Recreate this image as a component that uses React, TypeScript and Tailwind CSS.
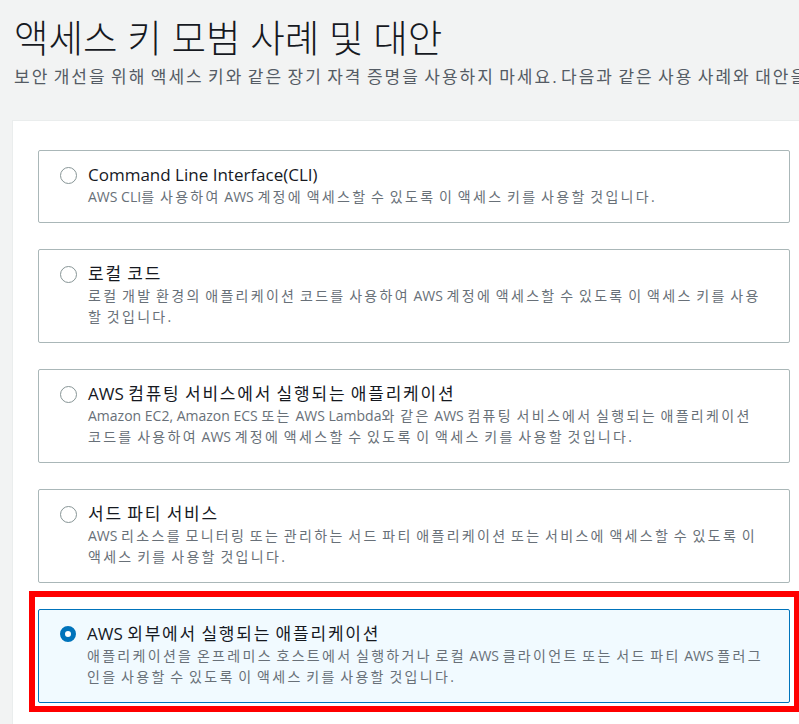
import React from 'react';

// 사용 사례 목록
const options = [
  {
    id: 'cli',
    title: 'Command Line Interface(CLI)',
    desc: 'AWS CLI를 사용하여 AWS 계정에 액세스할 수 있도록 이 액세스 키를 사용할 것입니다.',
  },
  {
    id: 'local',
    title: '로컬 코드',
    desc: '로컬 개발 환경의 애플리케이션 코드를 사용하여 AWS 계정에 액세스할 수 있도록 이 액세스 키를 사용할 것입니다.',
  },
  {
    id: 'compute',
    title: 'AWS 컴퓨팅 서비스에서 실행되는 애플리케이션',
    desc: 'Amazon EC2, Amazon ECS 또는 AWS Lambda와 같은 AWS 컴퓨팅 서비스에서 실행되는 애플리케이션 코드를 사용하여 AWS 계정에 액세스할 수 있도록 이 액세스 키를 사용할 것입니다.',
  },
  {
    id: 'third',
    title: '서드 파티 서비스',
    desc: 'AWS 리소스를 모니터링 또는 관리하는 서드 파티 애플리케이션 또는 서비스에 액세스할 수 있도록 이 액세스 키를 사용할 것입니다.',
  },
  {
    id: 'outside',
    title: 'AWS 외부에서 실행되는 애플리케이션',
    desc: '애플리케이션을 온프레미스 호스트에서 실행하거나 로컬 AWS 클라이언트 또는 서드 파티 AWS 플러그인을 사용할 수 있도록 이 액세스 키를 사용할 것입니다.',
  },
];

// 한글 구간만 자간을 넓힘 (원본 폰트의 한글 폭에 맞춤)
function Ko({ text, cls }: { text: string; cls: string }) {
  const parts = text.split(/([가-힣]+)/);
  return (
    <>
      {parts.map((p, i) =>
        /[가-힣]/.test(p) ? (
          <span key={i} className={cls}>
            {p}
          </span>
        ) : (
          <React.Fragment key={i}>{p}</React.Fragment>
        )
      )}
    </>
  );
}

export default function App() {
  const selected = 'outside';

  return (
    <div
      className="bg-[#f2f3f3] w-[799px] h-[724px] overflow-hidden flex flex-col"
      style={{ fontFamily: '"Open Sans", "Noto Sans CJK KR", sans-serif' }}
    >
      {/* 헤더 */}
      <div className="pl-[14px] pt-[14px] whitespace-nowrap">
        <h1 className="text-[#16191f] text-[37.5px] font-light leading-[48px]">액세스 키 모범 사례 및 대안</h1>
        <p className="text-[#545b64] text-[17px] leading-[24px] mt-[3px]">
          <Ko
            cls="tracking-[2px]"
            text="보안 개선을 위해 액세스 키와 같은 장기 자격 증명을 사용하지 마세요. 다음과 같은 사용 사례와 대안을 고려하세요."
          />
        </p>
      </div>

      {/* 옵션 컨테이너 */}
      <div className="ml-[12px] mt-[31px] flex-grow bg-white border-l border-t border-[#eaeded] pl-[25px] pr-[9px] pt-[29px] flex flex-col gap-[26px]">
        {options.map((opt) => {
          const isSel = opt.id === selected;
          return (
            <div key={opt.id} className="relative">
              <label
                className={`flex items-start rounded-[2px] border pl-[21px] pr-[20px] pt-[12px] pb-[15px] ${
                  isSel ? 'border-[#0073bb] bg-[#f1faff]' : 'border-[#aab7b8] bg-white'
                }`}
              >
                <span className="h-[24px] flex items-center shrink-0">
                  {isSel ? (
                    <span className="w-[16px] h-[16px] rounded-full border-[5px] border-[#0073bb] bg-white" />
                  ) : (
                    <span className="w-[17px] h-[17px] rounded-full border-[1.5px] border-[#879596] bg-white" />
                  )}
                </span>
                <span className="ml-[11px] flex flex-col">
                  <span className="text-[#16191f] text-[17px] leading-[23px]">
                    <Ko cls="tracking-[1.8px]" text={opt.title} />
                  </span>
                  <span className="text-[#687078] text-[14px] leading-[21px]">
                    <Ko cls="tracking-[2.3px]" text={opt.desc} />
                  </span>
                </span>
              </label>
              {isSel && (
                <div className="absolute -top-[18px] -left-[9px] -right-[10px] -bottom-[9px] border-[6px] border-[#ff0000] pointer-events-none" />
              )}
            </div>
          );
        })}
      </div>
    </div>
  );
}
